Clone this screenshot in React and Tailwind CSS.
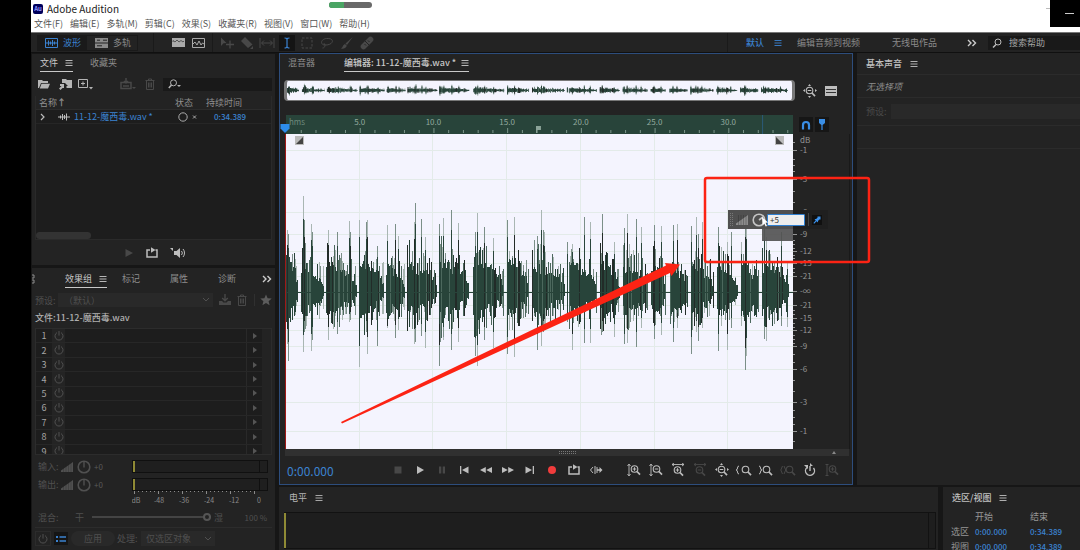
import React, { useState } from 'react';
import { clsx } from 'clsx';

// bursts of speech: [start, end, core height, top height]
const BURSTS = [
  [0, 12, 48, 58], [15, 38, 34, 52], [40, 71, 34, 54], [73, 98, 38, 58], [100, 119, 34, 52],
  [121, 151, 34, 52], [153, 183, 40, 60], [187, 218, 38, 56], [221, 243, 40, 56], [246, 279, 34, 54],
  [283, 311, 38, 54], [314, 334, 36, 54], [337, 362, 32, 54], [365, 380, 36, 52], [384, 402, 34, 48],
  [405, 428, 34, 54], [431, 452, 34, 48], [455, 473, 36, 52], [476, 503, 34, 50],
];

// single peaks: [x, up, down]
const PEAKS = [
  [1, 62, 52], [2, 58, 69], [17, 96, 60], [18, 72, 40], [25, 68, 59], [26, 60, 48], [42, 62, 48], [51, 60, 42],
  [63, 71, 30], [64, 60, 28], [73, 72, 75], [80, 70, 40], [81, 72, 62], [91, 46, 54], [101, 67, 36],
  [109, 68, 46], [112, 56, 38], [129, 89, 50], [128, 70, 52], [135, 73, 44], [139, 55, 56], [153, 68, 74],
  [157, 74, 48], [165, 82, 58], [172, 69, 50], [189, 60, 64], [191, 79, 74], [198, 65, 48], [207, 54, 56],
  [221, 72, 62], [228, 75, 65], [251, 56, 58], [255, 82, 54], [257, 62, 40], [258, 60, 38], [281, 50, 30],
  [286, 48, 58], [298, 75, 51], [304, 70, 51], [316, 78, 40], [328, 50, 45], [338, 64, 52], [341, 78, 51],
  [350, 73, 55], [355, 65, 36], [368, 67, 47], [375, 66, 43], [387, 67, 50], [391, 68, 36], [405, 66, 62],
  [410, 75, 40], [412, 58, 49], [416, 70, 36], [432, 65, 59], [441, 50, 58], [445, 60, 36], [455, 50, 34],
  [459, 73, 78], [460, 70, 64], [478, 68, 47], [480, 55, 49], [495, 60, 34], [501, 30, 35],
];

const GREEN = '#28443a';
const SPIKE_COLORS = ['#28443a', '#a9b6b3', '#7b8f88', '#222b28', '#4c685d'];

function buildWave() {
  let seed = 4211;
  const rnd = () => {
    seed = (seed * 1103515245 + 12345) % 2147483648;
    return seed / 2147483648;
  };
  const mid = 158;
  const layers = SPIKE_COLORS.map(() => '');
  let core = '';
  BURSTS.forEach(([a, b, c, h]) => {
    const top = [];
    const bottom = [];
    for (let x = a; x < b; x++) {
      const t = (x - a) / (b - a);
      const env = Math.min(1, 0.8 + t * 2) * (1 - 0.62 * t) * (x > b - 3 ? 0.6 : 1);
      const up = c * env * (0.6 + rnd() * 0.4);
      const down = c * env * (0.42 + rnd() * 0.42);
      top.push(`L${x} ${(mid - up).toFixed(1)}h1`);
      bottom.unshift(`L${x + 1} ${(mid + down).toFixed(1)}h-1`);
      if (rnd() < 0.62) {
        const su = Math.max(up, h * (1 - 0.5 * t) * (0.55 + rnd() * 0.5));
        const sd = Math.max(down, h * (1 - 0.5 * t) * (0.35 + rnd() * 0.5));
        layers[Math.floor(rnd() * 5)] += `M${x} ${(mid - su).toFixed(1)}h1V${(mid + sd).toFixed(1)}h-1z`;
      }
    }
    core += `M${a} ${mid}${top.join('')}L${b} ${mid}${bottom.join('')}z`;
  });
  PEAKS.forEach(([x, up, down], i) => {
    layers[1 + (i % 2)] += `M${x} ${mid - up}h1V${mid + down}h-1z`;
    layers[i % 3 ? 0 : 3] += `M${x} ${mid - up * 0.76}h1V${mid + down * 0.72}h-1z`;
  });
  return { core, layers };
}

const WAVE = buildWave();

function WaveShape() {
  return (
    <>
      {WAVE.layers.slice(1, 3).map((d, i) => <path key={i} d={d} fill={SPIKE_COLORS[i + 1]} />)}
      <path d={WAVE.core} fill={GREEN} />
      <path d={WAVE.layers[4]} fill={SPIKE_COLORS[4]} />
      <path d={WAVE.layers[3]} fill={SPIKE_COLORS[3]} />
      <path d={WAVE.layers[0]} fill={GREEN} />
      <path d="M0 157.5H507v1H0z" fill={GREEN} />
    </>
  );
}

const DB_MARKS = [
  [17, '-1'], [46, '-3'], [79, '-6'], [101, '-9'], [118, '-12'], [130, '-15'], [143, '-21'], [158, '-∞'],
  [172, '-21'], [185, '-15'], [197, '-12'], [213, '-9'], [236, '-6'], [269, '-3'], [298, '-1'],
];
const DB_MINOR = [8, 25, 31, 37, 57, 68, 86, 92, 106, 110, 114, 121, 124, 127, 134, 138, 176, 180, 189, 193, 201, 205, 209, 220, 228, 246, 257, 276, 283, 290, 307];

const Svg = ({ w = 14, h = 14, className, children }) => (
  <svg width={w} height={h} viewBox={`0 0 ${w} ${h}`} fill="none" stroke="currentColor" strokeWidth="1" className={clsx('shrink-0', className)} aria-hidden="true">
    {children}
  </svg>
);

const MenuLines = ({ className }) => (
  <Svg w={8} h={8} className={className}><path d="M0.5 1.5h7M0.5 4h7M0.5 6.5h7" strokeWidth="0.9" /></Svg>
);
const Power = () => (
  <Svg w={12} h={12}><path d="M4 2.6a4 4 0 1 0 4 0M6 1v4.6" /></Svg>
);
const Ramp = ({ className }) => (
  <Svg w={12} h={10} className={className}><path d="M0 10V8.500L12 0v10z" fill="currentColor" stroke="none" /><path d="M2.5 0v10M5 0v10M7.5 0v10M10 0v10" stroke="#232323" strokeWidth="0.3" /></Svg>
);
const Knob = () => (
  <Svg><circle cx="7" cy="7" r="5.8" strokeWidth="1.6" /><path d="M7 1.5v6" strokeWidth="1.4" /></Svg>
);
const Trash = () => (
  <Svg w={10} h={12}><path d="M0.5 2.5h9M3.5 2.5v-1.5h3v1.5M1.5 2.5v9h7v-9M3.5 4.5v5M5 4.5v5M6.5 4.5v5" /></Svg>
);
const Save = () => (
  <Svg w={14} h={12}><path d="M7 0v6M4.2 4 7 6.8 9.8 4" strokeWidth="1.4" /><path d="M1 7h3l1.5 1.5h3L10 7h3v4H1z" fill="currentColor" stroke="none" /></Svg>
);
const Loop = () => (
  <Svg><path d="M5 4H2v7h10V4h-1.5" strokeWidth="1.5" /><path d="M6 1.3 10.5 4 6 6.7z" fill="currentColor" stroke="none" /></Svg>
);
const Chevrons = () => (
  <Svg w={10} h={8}><path d="M1 1l3 3-3 3M5.500 1l3 3-3 3" strokeWidth="1.4" /></Svg>
);
const Lens = ({ x = 6, y = 6, sign }) => (
  <>
    <circle cx={x} cy={y} r="3.3" strokeWidth="1.1" />
    <path d={`M${x + 2.5} ${y + 2.5}l3 3.2`} strokeWidth="1.7" />
    {sign && <path d={`M${x - 1.8} ${y}h3.6`} />}
    {sign === '+' && <path d={`M${x} ${y - 1.8}v3.6`} />}
  </>
);
const VArrow = () => <path d="M2 1.500v11M0.5 3 2 1l1.500 2M0.500 11 2 13l1.500-2" strokeWidth="0.9" />;
const HArrow = () => <path d="M1 1.500h12M3 0 1 1.500l2 1.500M11 0l2 1.500-2 1.500" strokeWidth="0.9" />;
const ZoomFull = () => (
  <Svg>
    <Lens x={6.5} y={6.5} sign="-" />
    <path d="M6.500 0 8 2H5zM6.500 14 8 12H5zM0 6.500 2 5v3zM14 6.500 12 5v3z" fill="currentColor" stroke="none" />
  </Svg>
);

const fill = (d) => <path d={d} fill="currentColor" stroke="none" />;

const TRANSPORT = [
  ['停止', true, <Svg>{fill('M3.500 3.500h7v7h-7z')}</Svg>],
  ['播放', false, <Svg>{fill('M4 3 11 7l-7 4z')}</Svg>],
  ['暂停', true, <Svg>{fill('M4 3.500h2.300v7H4zM7.700 3.500H10v7H7.700z')}</Svg>],
  ['移到开头', false, <Svg>{fill('M3 3h1.300v8H3zM11.500 3.500v7L5 7z')}</Svg>],
  ['快退', false, <Svg>{fill('M6.800 4v6L1 7zM13 4v6L7.200 7z')}</Svg>],
  ['快进', false, <Svg>{fill('M1 4v6l5.800-3zM7.200 4v6L13 7z')}</Svg>],
  ['移到结尾', false, <Svg>{fill('M9.700 3H11v8H9.700zM2.500 3.500v7L9 7z')}</Svg>],
  ['录制', false, <Svg className="text-[#f03c3c]"><circle cx="7" cy="7" r="4" fill="currentColor" stroke="none" /></Svg>],
  ['循环播放', false, <Loop />],
  ['跳过所选', false, <Svg><path d="M4 4 1.500 7 4 10M6 3v8M8 4v6" />{fill('M8 6.300h2.500V4l3 3-3 3V7.700H8z')}</Svg>],
];

const ZOOMS = [
  ['放大振幅', false, <Svg><VArrow /><Lens x={7.5} sign="+" /></Svg>],
  ['缩小振幅', false, <Svg><VArrow /><Lens x={7.500} sign="-" /></Svg>],
  ['放大时间', false, <Svg><HArrow /><Lens x={6.500} y={7} sign="+" /></Svg>],
  ['缩小时间', true, <Svg><HArrow /><Lens x={6.500} y={7} sign="-" /></Svg>],
  ['全部缩小', false, <ZoomFull />],
  ['放大入点', false, <Svg w={16}><path d="M3 3C.500 3 2.500 7 0 7c2.500 0 .500 4 3 4" /><Lens x={9.500} y={6.5} /></Svg>],
  ['放大出点', false, <Svg><path d="M0 3c2.500 0 .500 4 3 4-2.500 0-.500 4-3 4" /><Lens x={7.500} y={6.500} /></Svg>],
  ['缩放至选区', true, <Svg w={16}><path d="M2.500 3 .8 7l1.700 4M4 3l1.700 4L4 11" /><Lens x={9.500} y={6.500} /></Svg>],
  ['重置缩放', false, <Svg><path d="M4 4.500a4.500 4.500 0 1 0 6.500.5M7 8V3" strokeWidth="1.4" />{fill('M7 0l3 3H7zM1 2h4v4z')}</Svg>],
  ['缩放所选轨道', true, <Svg><path d="M2 1.500v11M.5 1.500h3M.5 12.500h3" /><Lens x={7.500} sign="+" /></Svg>],
];

const TOOLS = [
  <Svg key="0">{fill('M1 1.500 6.500 7 3.500 7.300 1 10z')}<path d="M10 4.500v8M6 8.500h8" strokeWidth="1.300" /></Svg>,
  <Svg key="1">{fill('M5 1 12.500 8.500 8 12 1 5zM13 10v3h-3z')}</Svg>,
  <Svg key="2" w={16}><path d="M1 2v10M15 2v10M3 7h10M5 4.500 2.500 7 5 9.500M11 4.500 13.500 7 11 9.500" /></Svg>,
  <Svg key="3"><path d="M4.500 2c1.500 0 2.500.5 2.500 1.500v7C7 11.500 6 12 4.500 12M9.500 2C8 2 7 2.500 7 3.500v7c0 1 1 1.500 2.500 1.500" strokeWidth="1.200" /></Svg>,
  <Svg key="4"><path d="M2 2h10v10H2z" strokeDasharray="2.500 1.500" /></Svg>,
  <Svg key="5"><path d="M4 9C0 8 1 3 6.500 2.500 12 2 14 5 11 7.500 9 9 5 9.500 4 8.500s1-1.500 1 .5-1 3-2.500 3" /></Svg>,
  <Svg key="6">{fill('M12.800 1 7 9 5.500 7.500zM5 8l1.800 1.800C6 12.500 3 13 1 12.500 3 11.500 2.500 9 5 8z')}</Svg>,
  <Svg key="7">{fill('M8.500 1.500a2 2 0 0 1 4 4L5.500 12.500a2 2 0 0 1-4-4z')}<path d="M5 5l4 4M8 4.500l1.500 1.500M4.500 8 6 9.500" stroke="#232323" /></Svg>,
];

function IconButton({ label, disabled, className, children }) {
  return (
    <button type="button" aria-label={label} disabled={disabled} className={clsx('flex items-center justify-center shrink-0', disabled ? 'text-[#484848]' : 'text-[#bdbdbd]', className)}>
      {children}
    </button>
  );
}

function TitleBar() {
  const menus = ['文件(F)', '编辑(E)', '多轨(M)', '剪辑(C)', '效果(S)', '收藏夹(R)', '视图(V)', '窗口(W)', '帮助(H)'];
  return (
    <header className="relative bg-white text-[#333] shrink-0">
      <div className="flex items-center gap-[4px] h-[18px] pl-[2px]">
        <span className="w-[10px] h-[10px] rounded-[2px] bg-[#00005b] text-[#9a9aff] text-[6px] leading-[10px] text-center font-bold">Au</span>
        <h1 className="text-[10px] leading-[14px] text-[#222]">Adobe Audition</h1>
      </div>
      <nav className="flex items-center gap-[7px] h-[14px] pl-[3px] pb-[2px] text-[9px] leading-[12px] text-[#555]">
        {menus.map((m) => <button type="button" key={m} className="whitespace-nowrap">{m}</button>)}
      </nav>
      <div className="absolute left-[298px] top-[2px] w-[43px] h-[6px] rounded-full bg-[#696969] overflow-hidden">
        <div className="w-[15px] h-full bg-[#4aa564]" />
      </div>
      <span className="absolute right-[30px] top-[8px] w-[4px] h-px bg-[#bbb]" />
      <div className="absolute right-0 top-0 w-[30px] h-[27px] bg-black flex items-center justify-center pl-[9px]">
        <span className="w-[9px] h-px bg-[#ccc]" />
      </div>
    </header>
  );
}

function Toolbar() {
  return (
    <div className="flex items-center h-[21px] shrink-0 bg-[#232323] border-t border-t-[#777] border-b border-b-[#101010] pl-[6px] text-[9px] text-[#8a8a8a]">
      <div className="flex h-[16px] border border-[#1a1a1a]">
        <button type="button" className="flex items-center gap-[5px] pl-[7px] w-[49px] bg-[#1a1a1a] text-[#3b82d0]">
          <Svg w={13} h={10}><path d="M.5 .5h12v9H.5zM1 5h11M3.500 2.500v5M5.500 3.500v3M7.500 2v6M9.500 3.500v3" /></Svg>波形
        </button>
        <button type="button" className="flex items-center gap-[5px] pl-[8px] w-[50px]">
          <Svg w={13} h={10}>{fill('M0 0h13v4.400H0zM0 5.600h13V10H0z')}<path d="M2 2.200h3M8 2.200h4M2 7.800h5" stroke="#232323" /></Svg>多轨
        </button>
      </div>
      <span className="ml-[15px] w-px h-full bg-[#1a1a1a]" />
      <div className="flex items-center gap-[7px] ml-[18px] text-[#aaa]">
        <Svg w={13} h={9}>{fill('M0 0h13v9H0z')}<path d="M1 4V2.500L3 4l2-2 2 2 2-1.500L11 4l1-1" stroke="#555" /></Svg>
        <Svg w={13} h={10}><path d="M.5 .5h12v9H.5zM1 6l2-2 2 3 2-4 2 4 1.500-2L12 6" /></Svg>
      </div>
      <span className="ml-[7px] w-px h-full bg-[#1a1a1a]" />
      <div className="flex items-center gap-[4px] ml-[6px]">
        {TOOLS.map((icon, i) => (
          <IconButton key={i} label={`工具 ${i + 1}`} disabled={i !== 3} className={clsx('h-[16px] w-[16px]', i === 3 && 'bg-[#141414] text-[#3b82d0]!')}>{icon}</IconButton>
        ))}
      </div>
      <div className="flex items-center h-full ml-auto border-l border-[#1a1a1a] pl-[18px]">
        <button type="button" className="flex items-center gap-[10px] text-[#3b82d0] font-medium">默认 <MenuLines /></button>
        <button type="button" className="ml-[15px]">编辑音频到视频</button>
        <button type="button" className="ml-[32px]">无线电作品</button>
        <button type="button" aria-label="更多工作区" className="ml-[30px] text-[#ccc]"><Chevrons /></button>
        <label className="flex items-center gap-[7px] ml-[11px] w-[92px] h-[14px] bg-[#191919] pl-[4px] text-[#bbb]">
          <Svg w={10} h={10}><circle cx="6" cy="4" r="3" /><path d="M4 6.500 1 9.500" strokeWidth="1.500" /></Svg>
          <input type="search" aria-label="搜索帮助" placeholder="搜索帮助" className="w-[60px] bg-transparent outline-none placeholder:text-[#a5a5a5]" />
        </label>
      </div>
    </div>
  );
}

function FilesPanel() {
  return (
    <section className="flex flex-col h-[211px] shrink-0 bg-[#232323] px-[3px]">
      <div className="flex h-[18px] items-end pl-[5px] gap-[17px] text-[#8d8d8d]">
        <button type="button" className="flex items-center gap-[7px] pb-[2px] border-b border-[#c8c8c8] text-[#c8c8c8]">文件 <MenuLines /></button>
        <button type="button" className="pb-[3px]">收藏夹</button>
      </div>
      <div className="flex items-center h-[24px] pl-[3px] text-[#b5b5b5]">
        <Svg w={12} h={10}>{fill('M0 1h4l1 1h5v2H3L1 9H0zM3.500 4.800H12L10 9.500H1.800z')}</Svg>
        <Svg w={13} h={12} className="ml-[9px]">{fill('M3 1h4l1 1h5v8H7.500V8H9L6 5H3zM1 6h4v4H3.500L1.500 12 0 10.500 2.500 8H1z')}</Svg>
        <Svg w={15} h={12} className="ml-[6px]"><path d="M.5 1.500h9v8h-9zM5 3.500v4M3 5.500h4" />{fill('M11 9h4l-2 2.500z')}</Svg>
        <Svg w={16} h={12} className="ml-[27px] text-[#484848]"><path d="M1 4.500h10v6H1zM6 0v5M4 3l2 2 2-2M3 8h6" strokeWidth="1.500" />{fill('M12 9h4l-2 2z')}</Svg>
        <span className="ml-[9px] text-[#484848]"><Trash /></span>
        <label className="flex items-center ml-auto w-[109px] h-[13px] bg-[#191919] pl-[5px]">
          <Svg w={14} h={10}><circle cx="5.500" cy="3.800" r="3" /><path d="M3.500 6 .8 9" strokeWidth="1.500" />{fill('M9 6h4l-2 2z')}</Svg>
          <input type="search" aria-label="筛选文件" className="w-[80px] bg-transparent outline-none" />
        </label>
      </div>
      <div className="flex-1 min-h-0 flex flex-col justify-between bg-[#1d1d1d] border border-t-0 border-[#2a2a2a]">
        <table className="w-full text-left text-[#8f8f8f] table-fixed">
          <thead className="bg-[#232323]">
            <tr className="h-[13px] border-b border-[#2c2c2c]">
              <th className="font-normal w-[139px] pl-[3px]">名称<b>↑</b></th>
              <th className="font-normal w-[31px]">状态</th>
              <th className="font-normal">持续时间</th>
            </tr>
          </thead>
          <tbody>
            <tr className="h-[14px] border-b border-[#262626] text-[#3b82d0]">
              <td>
                <div className="flex items-center pl-[4px]">
                  <Svg w={6} h={8} className="text-[#bbb]"><path d="M1 1l3 3-3 3" strokeWidth="1.200" /></Svg>
                  <Svg w={12} h={8} className="ml-[12px] mr-[4px] text-[#bbb]"><path d="M0 4h12M2.500 2.500v3M4.500 1v6M6.500 2v4M8.500 .5v7" /></Svg>
                  <span className="whitespace-nowrap">11-12-魔西毒.wav *</span>
                </div>
              </td>
              <td><Svg w={22} h={10} className="ml-[2px] text-[#aaa]"><circle cx="6" cy="5" r="4.200" /><path d="M16 3.500l3 3M19 3.500l-3 3" /></Svg></td>
              <td className="text-[8px] pl-[8px] font-medium">0:34.389</td>
            </tr>
          </tbody>
        </table>
        <div className="w-[55px] h-[7px] rounded-full bg-[#333]" />
      </div>
      <div className="flex items-center justify-center gap-[11px] h-[25px] pl-[3px]">
        <IconButton label="播放" disabled><Svg w={10}>{fill('M1.500 3 9 7l-7.500 4z')}</Svg></IconButton>
        <IconButton label="循环"><Loop /></IconButton>
        <IconButton label="自动播放"><Svg w={16}>{fill('M0 2h3v3zM4 5h2.500L10 2v10L6.500 9H4z')}<path d="M11.500 5a3 3 0 0 1 0 4M13 3a6 6 0 0 1 0 8" /></Svg></IconButton>
      </div>
    </section>
  );
}

function Meter({ label }) {
  return (
    <div role="meter" aria-label={label} aria-valuenow={-60} className="flex justify-between w-[136px] h-[13px] border border-[#101010] bg-[#1f1f1f]">
      <span className="w-[2px] bg-[#8f8a35]" />
      <span className="w-[8px] border-l border-[#101010]" />
    </div>
  );
}

function EffectsPanel() {
  return (
    <section className="flex flex-col flex-1 min-h-0 bg-[#232323] px-[3px] text-[#505050]">
      <div className="flex items-end h-[20px] shrink-0 text-[#8d8d8d]">
        <Svg w={30} h={13} className="mb-[2px] -ml-[3px]"><path d="M0 2h2v3H0M0 7h2v3H0" /></Svg>
        <button type="button" className="ml-[3px] flex items-center gap-[7px] pb-[2px] border-b border-[#c8c8c8] text-[#c8c8c8]">效果组 <MenuLines /></button>
        <button type="button" className="ml-[15px] pb-[3px]">标记</button>
        <button type="button" className="ml-[30px] pb-[3px]">属性</button>
        <button type="button" className="ml-[30px] pb-[3px]">诊断</button>
        <button type="button" aria-label="更多面板" className="ml-auto pb-[5px] text-[#ccc]"><Chevrons /></button>
      </div>
      <div className="flex items-center h-[24px] shrink-0">
        <label htmlFor="preset" className="w-[23px]">预设:</label>
        <div className="relative flex-1">
          <select id="preset" disabled className="appearance-none opacity-100 w-full h-[14px] bg-[#292929] pl-[6px]"><option>（默认）</option></select>
          <Svg w={8} h={6} className="absolute right-[3px] top-[4px]"><path d="M1 1l3 3 3-3" /></Svg>
        </div>
        <IconButton label="保存预设" disabled className="ml-[5px]"><Save /></IconButton>
        <IconButton label="删除预设" disabled className="ml-[5px]"><Trash /></IconButton>
        <IconButton label="收藏" disabled className="ml-[7px] pl-[5px] border-l border-[#303030] text-[#5c5c5c]!"><Svg w={12} h={12}>{fill('M6 .5 7.600 4.300 11.700 4.600 8.600 7.300 9.600 11.300 6 9.100 2.400 11.300 3.400 7.300 .3 4.600 4.400 4.300z')}</Svg></IconButton>
      </div>
      <p className="h-[16px] text-[#b0b0b0] font-medium leading-[12px]">文件:11-12-魔西毒.wav</p>
      <div className="h-[127px] shrink-0 overflow-hidden border border-[#2c2c2c] pr-[9px]">
        <ol className="grid grid-rows-9 h-[130px]">
          {[1, 2, 3, 4, 5, 6, 7, 8, 9].map((n) => (
            <li key={n} className="flex items-stretch border-b border-[#272727] bg-[#1d1d1d]">
              <span className="w-[16px] flex items-center justify-center text-[#a5a5a5]">{n}</span>
              <button type="button" aria-label={`效果 ${n} 开关`} className="w-[13px] flex items-center justify-center bg-[#242424] text-[#505050]"><Power /></button>
              <span className="flex-1 border-r border-[#292929]" />
              <button type="button" aria-label={`效果 ${n} 菜单`} className="w-[15px] flex items-center justify-center text-[#555]"><Svg w={6} h={8}>{fill('M1 1l4 3-4 3z')}</Svg></button>
            </li>
          ))}
        </ol>
      </div>
      <div className="flex flex-col gap-[5px] pt-[5px] shrink-0">
        {['输入:', '输出:'].map((l) => (
          <div key={l} className="flex items-center h-[13px] pl-[3px]">
            <span className="w-[23px]">{l}</span>
            <Ramp />
            <span className="ml-[4px] w-[17px]"><Knob /></span>
            <span className="text-[8px] text-[#5a5a5a]">+0</span>
            <span className="ml-auto mr-[4px]"><Meter label={l} /></span>
          </div>
        ))}
      </div>
      <div className="self-end mr-[4px] shrink-0">
        <svg width="136" height="17" className="text-[7px] block" fill="#8a8a8a">
          {Array.from({ length: 31 }, (_, i) => <rect key={i} x={2 + i * 4} y="0" width="1" height={i % 6 ? 1 : 3} />)}
          {['dB', '-48', '-36', '-24', '-12', '0'].map((t, i) => <text key={t} x={i ? 2 + i * 25 : 4} y="12" textAnchor="middle">{t}</text>)}
        </svg>
      </div>
      <div className="flex items-center h-[18px] shrink-0 pl-[3px]">
        <span className="w-[37px]">混合:</span>
        <span className="w-[17px]">干</span>
        <input type="range" aria-label="混合" defaultValue="100" className="appearance-none w-[119px] h-[2px] bg-[#444] [&::-webkit-slider-thumb]:appearance-none [&::-webkit-slider-thumb]:w-[8px] [&::-webkit-slider-thumb]:h-[8px] [&::-webkit-slider-thumb]:rounded-full [&::-webkit-slider-thumb]:border-2 [&::-webkit-slider-thumb]:border-[#555] [&::-webkit-slider-thumb]:bg-[#232323]" />
        <span className="ml-[3px]">湿</span>
        <span className="ml-auto mr-[5px] text-[8px]">100 %</span>
      </div>
      <div className="flex items-center h-[22px] mt-[1px] shrink-0 border-t border-[#2c2c2c]">
        <button type="button" aria-label="效果组开关" className="w-[16px] h-[15px] flex items-center justify-center border border-[#2c2c2c]"><Power /></button>
        <button type="button" aria-label="列表视图" className="ml-[3px] w-[14px] h-[13px] flex items-center justify-center bg-[#151515] text-[#3b82d0]"><Svg w={10} h={8}>{fill('M0 1h2v2H0zM0 5h2v2H0z')}<path d="M3.500 2H10M3.500 6H10" strokeWidth="1.500" /></Svg></button>
        <button type="button" disabled className="ml-[3px] w-[44px] h-[15px] rounded-full bg-[#292929]">应用</button>
        <label htmlFor="process" className="ml-[2px] w-[24px]">处理:</label>
        <div className="relative">
          <select id="process" disabled className="appearance-none opacity-100 w-[74px] h-[15px] bg-[#292929] pl-[5px]"><option>仅选区对象</option></select>
          <Svg w={8} h={6} className="absolute right-[3px] top-[5px]"><path d="M1 1l3 3 3-3" /></Svg>
        </div>
      </div>
    </section>
  );
}

const pct = (v, total) => `${((v / total) * 100).toFixed(3)}%`;

function Ruler() {
  return (
    <svg width="100%" height="100%" className="block bg-[#28443a] text-[8px]">
      {Array.from({ length: 34 }, (_, i) => (
        <rect key={i} x={pct(i + 1, 34.389)} y={(i + 1) % 5 ? 15 : 13} width="1" height={(i + 1) % 5 ? 3 : 5} fill="#7d968b" />
      ))}
      <text x="3" y="10" fill="#6d8a7d">hms</text>
      {[5, 10, 15, 20, 25, 30].map((s) => (
        <text key={s} x={pct(s, 34.389)} y="10" textAnchor="middle" fill="#93aa9f">{s}.0</text>
      ))}
      <svg x="49.300%" y="11" width="6" height="8"><path d="M0 0h5v4H1v3H0z" fill="#8ba398" /></svg>
      <rect x="93.900%" y="0" width="1" height="19" fill="#2c5a78" />
    </svg>
  );
}

function WaveView() {
  return (
    <svg width="100%" height="100%" viewBox="0 0 507 315" preserveAspectRatio="none" className="block bg-[#f4f4fe]" shapeRendering="crispEdges">
      <g fill="#e3ebe9">
        {[1, 2, 3, 4, 5, 6].map((i) => <rect key={i} x={Math.round(i * 73.7) - 1} y="0" width="1" height="315" />)}
        {DB_MARKS.map(([y], i) => <rect key={i} x="0" y={y - 1} width="507" height="1" />)}
      </g>
      <WaveShape />
    </svg>
  );
}

function DbScale() {
  return (
    <svg width="100%" height="100%" className="block text-[8px]" fill="#969696">
      <text x="7" y="9">dB</text>
      {DB_MARKS.map(([y, t], i) => (
        <g key={i}>
          <rect x="0" y={pct(y - 1, 315)} width="4" height="1" />
          <text x="7" y={pct(y + 2, 315)}>{t}</text>
        </g>
      ))}
      {DB_MINOR.map((y) => <rect key={y} x="0" y={pct(y, 315)} width="2" height="1" />)}
      <rect x="56" y="0" width="1" height="100%" fill="#191919" />
    </svg>
  );
}

function Hud() {
  const [gain, setGain] = useState('+5');
  return (
    <div className="absolute right-[24px] top-[76px] w-[100px]">
      <div className="flex items-center h-[19px] bg-linear-to-r from-[#505050] from-65% to-[#1f1f1f] to-65% text-[#c5c5c5]">
        <span className="ml-[2px] w-[3px] h-[13px] border-x border-dotted border-[#777]" />
        <Ramp className="ml-[3px] text-[#8c8c8c]" />
        <span className="ml-[4px]"><Svg><circle cx="7" cy="7" r="5.800" strokeWidth="1.600" /><path d="M7 7l4-3" strokeWidth="1.600" /></Svg></span>
        <input aria-label="调节振幅" value={gain} onChange={(e) => setGain(e.target.value)} className="ml-[1px] w-[38px] h-[12px] border border-[#2f7fd0] rounded-[1px] bg-[#eee] pl-[2px] text-[8px] text-[#333] outline-none" />
        <span className="ml-[3px] w-px h-[13px] bg-[#444]" />
        <IconButton label="固定" className="ml-[3px] w-[10px] h-[10px] bg-[#101010] text-[#3b93ee]!"><Svg w={8} h={8}>{fill('M4.500 .5h3v3L6.300 3.600 5 5v1.500L3.600 5.300 1.200 7.700.400 6.900l2.300-2.400L1.500 3H3l1.500-1.300z')}</Svg></IconButton>
      </div>
      <div className="ml-[34px] w-[31px] h-[12px] bg-[#505050]/90" />
      <Svg w={8} h={11} className="absolute left-[34px] top-[7px] text-white">{fill('M0 0l6 5.500-2.500.3L5 9 3.700 9.500 2.300 6.500.5 8z')}</Svg>
    </div>
  );
}

function Editor() {
  return (
    <section className="flex flex-col flex-1 min-w-0 bg-[#232323] border border-[#2d4d7c]">
      <div className="flex items-end h-[18px] shrink-0 pl-[8px] gap-[29px] text-[#8d8d8d]">
        <button type="button" className="pb-[3px]">混音器</button>
        <button type="button" className="flex items-center gap-[5px] pb-[2px] border-b border-[#c8c8c8] text-[#c8c8c8] font-medium">编辑器: 11-12-魔西毒.wav * <MenuLines /></button>
      </div>
      <div className="flex items-center mt-[8px] pl-[4px] shrink-0">
        <div className="flex-1 h-[21px] bg-[#f4f4fe] rounded-[4px] border-y border-[#777] border-x-[3px]">
          <svg width="100%" height="100%" viewBox="0 25 507 266" preserveAspectRatio="none" className="block"><WaveShape /></svg>
        </div>
        <div className="flex items-center w-[57px] pl-[8px] gap-[8px] text-[#bdbdbd]">
          <ZoomFull />
          <Svg w={12} h={12}>{fill('M0 1h12v10H0z')}<path d="M1 4.500h10M1 7.500h10" stroke="#333" /></Svg>
        </div>
      </div>
      <div className="grid grid-cols-[1fr_59px] grid-rows-[19px_1fr] flex-1 min-h-0 mt-[14px] pl-[6px] relative">
        <Ruler />
        <div className="flex items-center gap-[2px] pl-[6px]">
          <IconButton label="对齐" className="w-[14px] h-[15px] bg-[#161616] text-[#3a8ee6]!"><Svg w={10} h={10}><path d="M2 9.500V5a3 3 0 0 1 6 0v4.500" strokeWidth="2.200" /></Svg></IconButton>
          <IconButton label="标记" className="w-[14px] h-[15px] bg-[#161616] text-[#3a8ee6]!"><Svg w={8} h={11}>{fill('M1 0h6v4L4.600 6v5H3.400V6L1 4z')}</Svg></IconButton>
        </div>
        <div className="relative min-h-0 border-l border-[#a01818] ml-[-1px]">
          <div className="absolute inset-0"><WaveView /></div>
          <Svg w={9} h={9} className="absolute left-[9px] top-[2px] bg-[#bbb]"><path d="M8 1v7H1z" fill="#444" stroke="none" /></Svg>
          <Svg w={9} h={9} className="absolute right-[9px] top-[2px] bg-[#bbb]"><path d="M1 1v7h7z" fill="#444" stroke="none" /></Svg>
          <Svg w={10} h={10} className="absolute left-[-6px] top-[-11px]"><path d="M.5 1h9v4.500L5 10 .5 5.500z" fill="#2d8ceb" stroke="none" /></Svg>
        </div>
        <div className="relative min-h-0"><div className="absolute inset-0"><DbScale /></div></div>
        <div className="absolute inset-x-0 top-[19px]"><Hud /></div>
      </div>
      <div className="flex items-center justify-center h-[7px] shrink-0 ml-[5px] mr-[3px] bg-[#303030]">
        <span className="w-[17px] h-[3px] border-y border-dotted border-[#777]" />
        <Svg w={4} h={3} className="absolute left-[832px] text-[#888]">{fill('M0 3 2 0l2 3z')}</Svg>
      </div>
      <div className="flex items-center h-[28px] shrink-0 pl-[7px]">
        <span className="w-[100px] text-[12px] text-[#3b82d0]">0:00.000</span>
        <div className="flex">
          {TRANSPORT.map(([label, off, icon]) => <IconButton key={label} label={label} disabled={off} className="w-[22px] h-[22px]">{icon}</IconButton>)}
        </div>
        <div className="flex ml-[16px]">
          {ZOOMS.map(([label, off, icon]) => <IconButton key={label} label={label} disabled={off} className="w-[22px] h-[22px]">{icon}</IconButton>)}
        </div>
      </div>
    </section>
  );
}

function EssentialSound() {
  return (
    <aside className="w-[223px] shrink-0 bg-[#232323] text-[#8d8d8d]">
      <h2 className="flex items-center gap-[8px] h-[22px] pl-[9px] border-b border-[#2b2b2b] text-[#c0c0c0] font-medium">基本声音 <MenuLines /></h2>
      <p className="flex items-center h-[23px] pl-[9px] border-b border-[#2b2b2b] italic">无选择项</p>
      <div className="flex items-center h-[28px] pl-[9px] border-b border-[#2b2b2b] text-[#4a4a4a]">
        <label htmlFor="sound-preset" className="w-[25px]">预设:</label>
        <select id="sound-preset" disabled className="appearance-none opacity-100 flex-1 h-[15px] bg-[#292929]"><option /></select>
      </div>
      <div className="h-[23px] border-b border-[#2b2b2b]" />
    </aside>
  );
}

function Levels() {
  return (
    <section className="flex flex-col flex-1 bg-[#232323]">
      <h2 className="flex items-center gap-[8px] h-[21px] pl-[10px] text-[#b5b5b5]">电平 <MenuLines /></h2>
      <div className="flex justify-between flex-1 mt-[4px] ml-[5px] mr-[2px] mb-px border border-l-0 border-[#121212] bg-[#1e1e1e]">
        <span className="w-[2px] bg-[#8f8a35]" />
        <span className="w-[7px] border-l border-[#121212]" />
      </div>
    </section>
  );
}

function SelectionView() {
  return (
    <section className="w-[137px] shrink-0 bg-[#232323] overflow-hidden text-[#969696]">
      <h2 className="flex items-center gap-[7px] h-[21px] pl-[9px] text-[#c0c0c0] font-medium">选区/视图 <MenuLines /></h2>
      <table className="ml-[8px] text-left">
        <thead>
          <tr className="h-[16px]"><td className="w-[24px]" /><th className="font-normal w-[55px]">开始</th><th className="font-normal">结束</th></tr>
        </thead>
        <tbody>
          {['选区', '视图'].map((l) => (
            <tr key={l} className="h-[15px]">
              <th className="font-normal leading-[12px]">{l}</th>
              <td className="text-[8px] leading-[12px] font-medium text-[#3b82d0]">0:00.000</td>
              <td className="text-[8px] leading-[12px] font-medium text-[#3b82d0]">0:34.389</td>
            </tr>
          ))}
        </tbody>
      </table>
    </section>
  );
}

export default function App() {
  return (
    <div lang="zh-CN" className="relative flex h-screen overflow-hidden bg-black pl-[31px] font-['Noto_Sans_CJK_SC',sans-serif] text-[9px] leading-[13px]">
      <div className="flex flex-col flex-1 min-w-0 bg-[#161616]">
        <TitleBar />
        <Toolbar />
        <main className="flex flex-1 min-h-0 gap-[4px] pl-px">
          <div className="flex flex-col w-[243px] shrink-0 gap-[3px] pt-px">
            <FilesPanel />
            <EffectsPanel />
          </div>
          <div className="flex flex-col flex-1 min-w-0 gap-[2px]">
            <div className="flex flex-1 min-h-0 gap-[4px]">
              <Editor />
              <EssentialSound />
            </div>
            <div className="flex h-[63px] shrink-0 gap-[5px]">
              <Levels />
              <SelectionView />
            </div>
          </div>
        </main>
      </div>
      <svg width="540" height="260" viewBox="0 0 540 260" className="absolute left-[340px] top-[170px] pointer-events-none" aria-hidden="true">
        <rect x="365" y="8" width="164" height="84" rx="2" fill="none" stroke="#fc2314" strokeWidth="2.500" />
        <path d="M1 252 326 95.500 325 93 340 94.500 331.500 106 330 103 2 253.500z" fill="#fc2314" />
      </svg>
    </div>
  );
}
